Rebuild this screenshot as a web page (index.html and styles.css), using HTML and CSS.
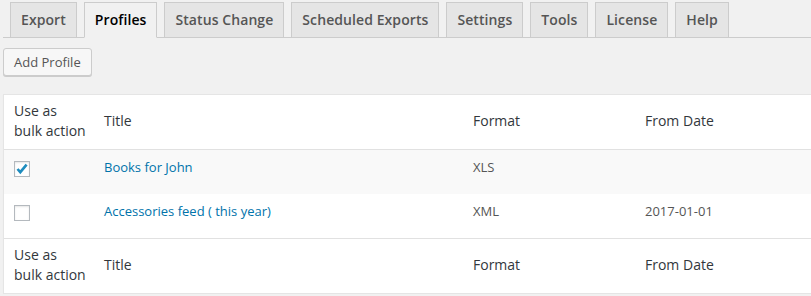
FILE: index.html
```html
<!DOCTYPE html>
<html lang="en">
<head>
    <meta charset="UTF-8">
    <title>Profiles</title>
    <link rel="stylesheet" href="styles.css">
</head>
<body>

<div class="wrap">
    <nav class="nav-tabs">
        <a href="#" class="nav-tab">Export</a>
        <a href="#" class="nav-tab active">Profiles</a>
        <a href="#" class="nav-tab">Status Change</a>
        <a href="#" class="nav-tab">Scheduled Exports</a>
        <a href="#" class="nav-tab">Settings</a>
        <a href="#" class="nav-tab">Tools</a>
        <a href="#" class="nav-tab">License</a>
        <a href="#" class="nav-tab">Help</a>
    </nav>

    <div class="actions">
        <button class="button">Add Profile</button>
    </div>

    <table class="profiles">
        <colgroup>
            <col class="col-check">
            <col class="col-title">
            <col class="col-format">
            <col>
        </colgroup>
        <thead>
            <tr>
                <th class="bulk">Use as<br>bulk action</th>
                <th>Title</th>
                <th>Format</th>
                <th>From Date</th>
            </tr>
        </thead>
        <tbody>
            <tr class="alt">
                <td class="check-cell">
                    <span class="check">
                        <svg width="14" height="14" viewBox="0 0 14 14"><polyline points="2.5,7 5.3,10.2 11.6,2.6" fill="none" stroke="#1e8cbe" stroke-width="2.6"/></svg>
                    </span>
                </td>
                <td><a href="#">Books for John</a></td>
                <td>XLS</td>
                <td></td>
            </tr>
            <tr>
                <td class="check-cell"><span class="check"></span></td>
                <td><a href="#">Accessories feed ( this year)</a></td>
                <td>XML</td>
                <td>2017-01-01</td>
            </tr>
        </tbody>
        <tfoot>
            <tr>
                <th class="bulk">Use as<br>bulk action</th>
                <th>Title</th>
                <th>Format</th>
                <th>From Date</th>
            </tr>
        </tfoot>
    </table>
</div>

</body>
</html>
```

FILE: styles.css
```css
body {
    margin: 0;
    background-color: #f1f1f1;
    font-family: "Open Sans", "Liberation Sans", sans-serif;
    color: #444;
    overflow: hidden;
}
.wrap {
    padding: 2px 0 0 3px;
}

/* Tabs */
.nav-tabs {
    display: flex;
    border-bottom: 1px solid #ccc;
}
.nav-tab {
    margin-left: 7px;
    padding: 5px 10px;
    border: 1px solid #ccc;
    border-bottom: none;
    background-color: #e5e5e5;
    color: #555;
    font-size: 14px;
    line-height: 24px;
    font-weight: 600;
    letter-spacing: 0.08px;
    text-decoration: none;
    white-space: nowrap;
}
.nav-tab.active {
    background-color: #f1f1f1;
    color: #000;
    border-bottom: 1px solid #f1f1f1;
    margin-bottom: -1px;
}

/* Button row */
.actions {
    display: flex;
    padding: 10px 0 18px;
}
.button {
    height: 28px;
    padding: 0 10px 1px;
    border: 1px solid #ccc;
    border-radius: 3px;
    background-color: #f7f7f7;
    box-shadow: 0 1px 0 #ccc;
    color: #555;
    font-family: inherit;
    font-size: 13px;
    line-height: 26px;
}

/* Table */
.profiles {
    width: 830px;
    table-layout: fixed;
    border-spacing: 0;
    border: 1px solid #e5e5e5;
    background-color: #fff;
    box-shadow: 0 1px 1px rgba(0, 0, 0, 0.04);
}
.col-check {
    width: 90px;
}
.col-title {
    width: 369px;
}
.col-format {
    width: 172px;
}
.profiles th {
    padding: 6px 10px 8px;
    text-align: left;
    vertical-align: middle;
    font-weight: 400;
    font-size: 14px;
    line-height: 20px;
    color: #32373c;
    white-space: nowrap;
}
.profiles thead th {
    border-bottom: 1px solid #e1e1e1;
}
.profiles tfoot th {
    border-top: 1px solid #e1e1e1;
}
.profiles td {
    padding: 7px 10px 17px;
    vertical-align: top;
    font-size: 13px;
    line-height: 20px;
    color: #555;
}
.profiles tr.alt td {
    background-color: #f9f9f9;
}
.profiles a {
    color: #0073aa;
    text-decoration: none;
}
.profiles td.check-cell {
    padding: 11px 0 0 10px;
    line-height: 0;
}
.check {
    display: inline-flex;
    align-items: center;
    justify-content: center;
    box-sizing: border-box;
    width: 16px;
    height: 16px;
    border: 1px solid #b4b9be;
    background-color: #fff;
    box-shadow: inset 0 1px 2px rgba(0, 0, 0, 0.1);
}
```
